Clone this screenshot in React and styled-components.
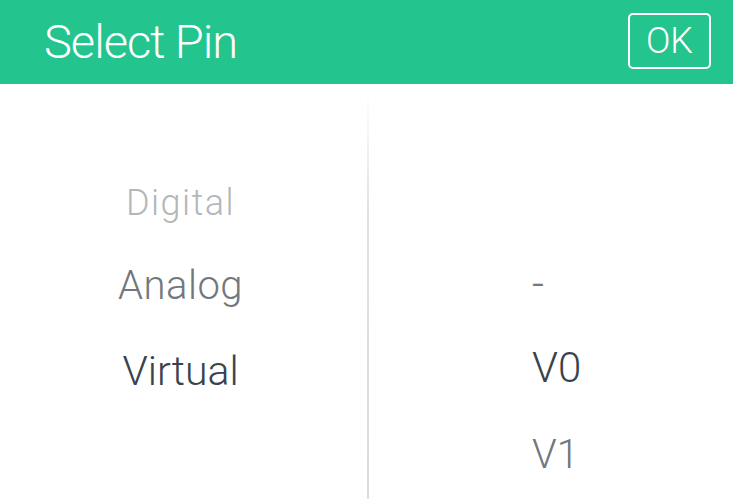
import React from "react";
import styled, { createGlobalStyle } from "styled-components";

const GlobalStyle = createGlobalStyle`
  html, body {
    margin: 0;
    padding: 0;
    background: #ffffff;
    font-family: Roboto, "Noto Sans", sans-serif;
    overflow: hidden;
  }
`;

const Screen = styled.div`
  width: 733px;
  height: 499px;
  display: flex;
  flex-direction: column;
  background: #ffffff;
`;

const TopBar = styled.header`
  height: 84px;
  flex-shrink: 0;
  background: #23c48e;
  display: flex;
  align-items: center;
  justify-content: space-between;
  padding: 0 22px 0 44px;
  box-sizing: border-box;
`;

const Title = styled.h1`
  margin: 0;
  color: #ffffff;
  font-family: Roboto, sans-serif;
  font-weight: 300;
  font-size: 47px;
  letter-spacing: -1px;
  line-height: 1;
  padding-bottom: 2px;
`;

const OkButton = styled.button`
  width: 83px;
  height: 56px;
  margin-bottom: 2px;
  border: 2px solid #ffffff;
  border-radius: 5px;
  background: transparent;
  color: #ffffff;
  font-family: Roboto, sans-serif;
  font-weight: 300;
  font-size: 36px;
  line-height: 1;
  padding: 0;
  cursor: pointer;
`;

const Body = styled.div`
  flex: 1;
  display: flex;
  overflow: hidden;
`;

const Column = styled.div`
  width: ${(p) => p.width}px;
  display: flex;
  flex-direction: column;
  align-items: ${(p) => (p.align === "start" ? "flex-start" : "center")};
  padding-top: ${(p) => p.offset}px;
  padding-left: ${(p) => p.inset || 0}px;
  padding-right: ${(p) => p.trail || 0}px;
  box-sizing: border-box;
`;

const Divider = styled.div`
  width: 2px;
  flex-shrink: 0;
  margin-top: 8px;
  background: linear-gradient(to bottom, rgba(220, 220, 220, 0) 0%, #e0e0e0 30%, #dcdcdc 100%);
`;

const Row = styled.div`
  height: ${(p) => p.h}px;
  display: flex;
  align-items: center;
  font-family: Roboto, sans-serif;
  font-weight: 300;
  font-size: ${(p) => p.size}px;
  letter-spacing: ${(p) => p.spacing || 0}px;
  color: ${(p) => p.color};
  white-space: nowrap;
`;

const tones = {
  faint: "#b3b7ba",
  mid: "#71787d",
  active: "#38434b",
};

const modes = [
  { label: "Digital", h: 80, size: 36, spacing: 1.5, tone: "faint" },
  { label: "Analog", h: 84, size: 40, spacing: 0.5, tone: "mid" },
  { label: "Virtual", h: 88, size: 41, spacing: 0, tone: "active" },
];

const pins = [
  { label: "-", h: 84, size: 42, tone: "mid" },
  { label: "V0", h: 88, size: 42, tone: "active" },
  { label: "V1", h: 92, size: 40, tone: "mid" },
];

export default function App() {
  return (
    <>
      <GlobalStyle />
      <Screen>
        <TopBar>
          <Title>Select Pin</Title>
          <OkButton>OK</OkButton>
        </TopBar>
        <Body>
          <Column width={367} offset={79} trail={6}>
            {modes.map((m) => (
              <Row key={m.label} h={m.h} size={m.size} spacing={m.spacing} color={tones[m.tone]}>
                {m.label}
              </Row>
            ))}
          </Column>
          <Divider />
          <Column width={364} offset={159} inset={163} align="start">
            {pins.map((p) => (
              <Row key={p.label} h={p.h} size={p.size} color={tones[p.tone]}>
                {p.label}
              </Row>
            ))}
          </Column>
        </Body>
      </Screen>
    </>
  );
}
